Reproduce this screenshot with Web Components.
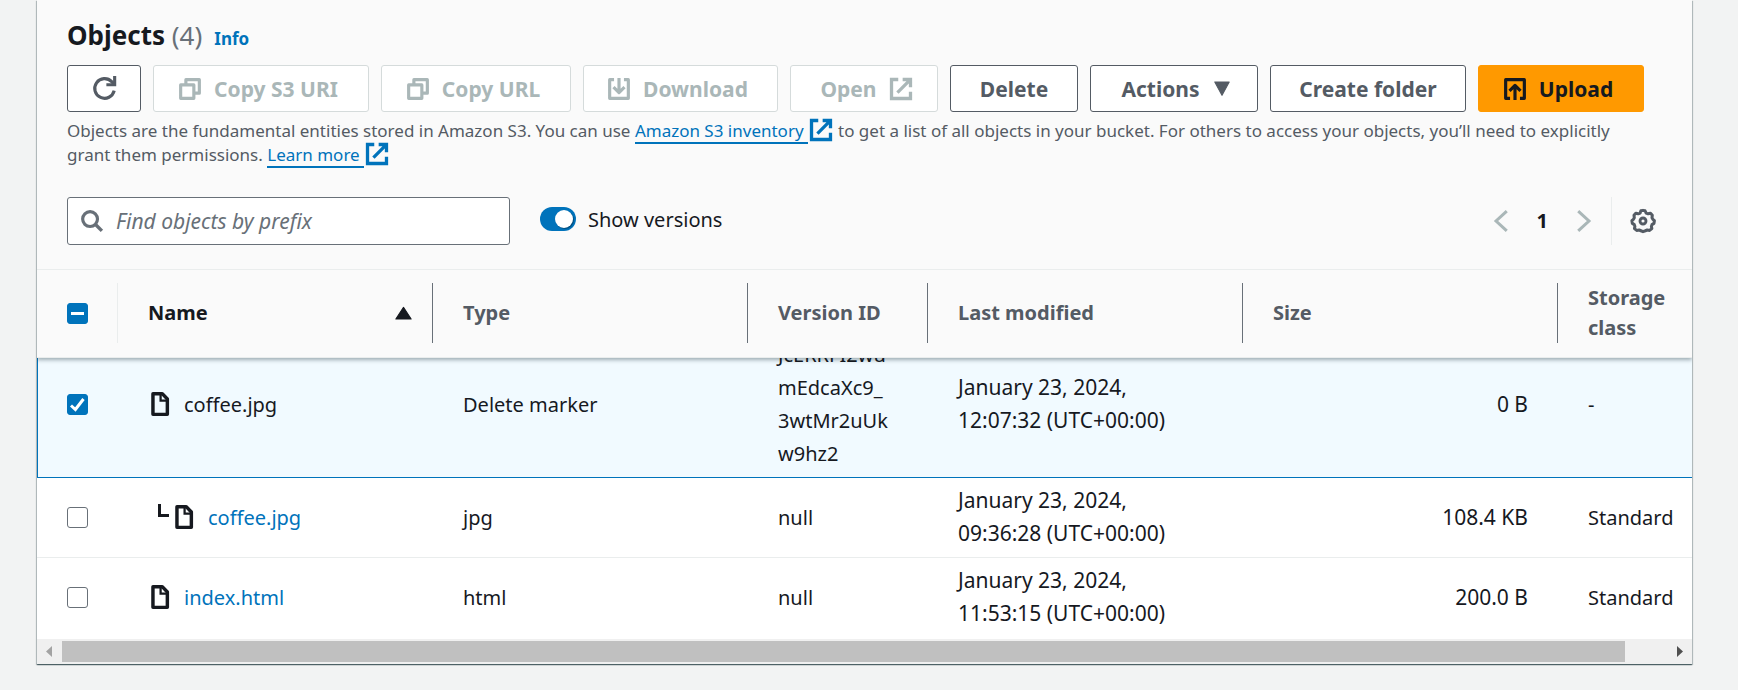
<!DOCTYPE html>
<html lang="en">
<head>
<meta charset="utf-8">
<title>Objects</title>
<style>
body{margin:0;background:#f2f3f3;color:#16191f;font:20px/33px "Noto Sans","Open Sans",sans-serif}
s3-panel{margin:0 46px 26px 37px}
</style>
</head>
<body>
<s3-panel>
  <s3-header slot="header"></s3-header>
  <s3-toolbar slot="header"></s3-toolbar>
  <s3-table></s3-table>
  <s3-scrollbar></s3-scrollbar>
</s3-panel>
<script>
const define = (name, html, setup) => customElements.define(name, class extends HTMLElement {
  connectedCallback() {
    if (this.shadowRoot) return;
    this.attachShadow({ mode: 'open' }).innerHTML = html;
    if (setup) setup.call(this, this.shadowRoot);
  }
});

const ICONS = {
  refresh: '<path d="M14.2 9.4A6.3 6.3 0 1 1 12.6 3.6L14 5" fill="none" stroke="currentColor" stroke-width="2"/><path d="M14.5 0v5.6H9.2" fill="none" stroke="currentColor" stroke-width="2"/>',
  copy: '<path d="M1.2 5h9.6v9.8H1.2zM5 4.6V1.2h9.8V11h-3.6" fill="none" stroke="currentColor" stroke-width="2.3" stroke-linejoin="round"/>',
  download: '<path d="M4.4 1.2H1.2v13.6h13.6V1.2h-3.2M8 0v10M4 6.6l4 4 4-4" fill="none" stroke="currentColor" stroke-width="2.3" stroke-linejoin="round"/>',
  upload: '<path d="M4.4 14.8H1.2V1.2h13.6v13.6h-3.2M8 16V6M4 9.4l4-4 4 4" fill="none" stroke="currentColor" stroke-width="2.3" stroke-linejoin="round"/>',
  external: '<path d="M6 1.1H1.1v13.8h13.8V10M9.2 1.1h5.7v5.7M14.6 1.4L5.4 10.6" fill="none" stroke="currentColor" stroke-width="2.4"/>',
  caret: '<path d="M1.6 1.8h12.8L8 13.6z" fill="currentColor" stroke="currentColor" stroke-linejoin="round"/>',
  sort: '<path d="M.8 13.2h14.4L8 2.2z" fill="currentColor" stroke="currentColor" stroke-linejoin="round"/>',
  search: '<circle cx="6.6" cy="6.6" r="5.4" fill="none" stroke="currentColor" stroke-width="2.3"/><path d="M10.4 10.4l4.8 4.8" fill="none" stroke="currentColor" stroke-width="2.5"/>',
  prev: '<path d="M12.2.8L4.4 8l7.8 7.2" fill="none" stroke="currentColor" stroke-width="2.2"/>',
  next: '<path d="M3.8.8L11.6 8l-7.8 7.2" fill="none" stroke="currentColor" stroke-width="2.2"/>',
  gear: '<path d="M6.6 1.2L8 .9l1.4.3.7 1.5 1.3.5 1.6-.4 1.2 1.4-.2 1.6.6 1.1 1 .9-.3 1.8-1.3.8-.4 1.2.3 1.5-1.5 1.2-1.6-.3-1.2.5L8 15.1l-1.4-.6-1.2-.5-1.6.3-1.5-1.2.3-1.5-.4-1.2-1.3-.8-.3-1.8 1-.9.6-1.1L2 4.2l1.2-1.4 1.6.4 1.3-.5z" fill="none" stroke="currentColor" stroke-width="2" stroke-linejoin="round"/><circle cx="8" cy="8" r="2" fill="none" stroke="currentColor" stroke-width="1.9"/>',
  file: '<path d="M3.3 1.1h6.2l3.4 3.6v10.2H3.3z" fill="none" stroke="currentColor" stroke-width="2.3" stroke-linejoin="round"/><path d="M8.4 1.2v4.6h4.4" fill="none" stroke="currentColor" stroke-width="1.5"/>',
  branch: '<path d="M1.5 0v11.5H11" fill="none" stroke="currentColor" stroke-width="3"/>'
};
define('s3-icon', `<style>:host{display:inline-block;width:22px;height:22px;flex:none}svg{display:block;width:100%;height:100%;overflow:visible}</style><svg viewBox="0 0 16 16" aria-hidden="true"></svg>`,
  function (r) { r.querySelector('svg').innerHTML = ICONS[this.getAttribute('name')]; });

define('s3-button', `<style>
:host{display:block;flex:none}
button{box-sizing:border-box;width:100%;height:47px;display:flex;align-items:center;justify-content:center;gap:13px;padding:0 2px;border:1px solid #545b64;border-radius:3px;background:#fff;color:#545b64;font:bold 21px/30px "Noto Sans","Open Sans",sans-serif;white-space:nowrap}
button.icon-led{padding-right:7px}
button.icon-trail{padding-left:6px}
button:disabled{border-color:#d5dbdb;color:#aab7b8}
:host([primary]) button{background:#ff9900;border-color:#ff9900;color:#16191f}
</style><button type="button"><slot></slot></button>`,
  function (r) {
    const b = r.querySelector('button');
    b.disabled = this.hasAttribute('disabled');
    if (this.hasAttribute('label')) b.setAttribute('aria-label', this.getAttribute('label'));
    if (this.firstElementChild && this.textContent.trim()) b.className = this.firstChild === this.firstElementChild ? 'icon-led' : 'icon-trail';
  });

define('s3-link', `<style>:host{display:inline}a{color:#0073bb;text-decoration:none;white-space:nowrap}span{border-bottom:2px solid #0073bb;padding-right:4px}s3-icon{vertical-align:-4px;margin:0 2px}</style><a href="#"><span><slot></slot></span><s3-icon name="external"></s3-icon></a>`);

define('s3-panel', `<style>
:host{display:block;background:#fff;box-shadow:0 1px 1px 0 rgba(0,28,36,.5),1px 1px 1px 0 rgba(0,28,36,.2),-1px 1px 1px 0 rgba(0,28,36,.2)}
.head{background:#fafafa;border-bottom:1px solid #eaeded;padding:17px 30px 24px}
</style><div class="head"><slot name="header"></slot></div><slot></slot>`);

define('s3-header', `<style>
:host{display:block}
.title{display:flex;align-items:baseline;gap:8px}
h2{margin:0;font-size:26px;line-height:36px;font-weight:700}
h2 span{color:#687078;font-weight:400}
.title a{color:#0073bb;font-weight:700;font-size:17px;text-decoration:none;margin-left:4px}
.actions{display:flex;flex-wrap:wrap;gap:12px;margin-top:10px}
p{margin:7px 0 0;padding-right:10px;color:#545b64;font-size:17px;line-height:24px}
</style>
<div class="title"><h2>Objects <span>(4)</span></h2><a href="#">Info</a></div>
<div class="actions">
<s3-button style="width:74px" label="Refresh"><s3-icon name="refresh" style="width:25px;height:25px"></s3-icon></s3-button>
<s3-button style="width:216px" disabled><s3-icon name="copy"></s3-icon>Copy S3 URI</s3-button>
<s3-button style="width:190px" disabled><s3-icon name="copy"></s3-icon>Copy URL</s3-button>
<s3-button style="width:195px" disabled><s3-icon name="download"></s3-icon>Download</s3-button>
<s3-button style="width:148px" disabled>Open<s3-icon name="external"></s3-icon></s3-button>
<s3-button style="width:128px">Delete</s3-button>
<s3-button style="width:168px">Actions<s3-icon name="caret" style="width:18px;height:18px"></s3-icon></s3-button>
<s3-button style="width:196px">Create folder</s3-button>
<s3-button style="width:166px" primary><s3-icon name="upload"></s3-icon>Upload</s3-button>
</div>
<p>Objects are the fundamental entities stored in Amazon S3. You can use <s3-link>Amazon S3 inventory</s3-link> to get a list of all objects in your bucket. For others to access your objects, you’ll need to explicitly grant them permissions. <s3-link>Learn more</s3-link></p>`);

define('s3-toolbar', `<style>
:host{display:flex;align-items:center;margin-top:30px}
.search{box-sizing:border-box;flex:0 1 443px;height:48px;display:flex;align-items:center;gap:13px;padding:0 13px;border:1px solid #687078;border-radius:3px;background:#fff;color:#687078}
input[type=search]{flex:1;min-width:0;border:0;padding:0;outline:0;background:none;font:21px/30px "Noto Sans","Open Sans",sans-serif;color:#16191f}
input::placeholder{color:#687078;font-style:italic;opacity:1}
.toggle{display:flex;align-items:center;gap:12px;margin:0 auto 4px 30px}
.toggle input{appearance:none;box-sizing:border-box;margin:0;width:36px;height:24px;padding:3px;border-radius:12px;background:#0073bb;display:flex;justify-content:flex-end}
.toggle input::before{content:"";width:18px;height:18px;border-radius:50%;background:#fff;box-shadow:1px 1px 1px rgba(0,0,0,.35)}
nav{display:flex;align-items:center;gap:25px}
button{border:0;padding:0;background:none;font:20px/30px "Noto Sans","Open Sans",sans-serif;color:#16191f;display:block}
button s3-icon{display:block}
button:disabled{color:#aab7b8}
.page{font-weight:700}
.prefs{display:flex;align-items:center;height:48px;border-left:1px solid #eaeded;margin-left:16px;padding:0 7px 0 19px}
.prefs button{color:#545b64}
</style>
<div class="search"><s3-icon name="search"></s3-icon><input type="search" placeholder="Find objects by prefix" aria-label="Find objects by prefix"></div>
<label class="toggle"><input type="checkbox" role="switch" checked><span>Show versions</span></label>
<nav aria-label="Pagination"><button type="button" disabled aria-label="Previous page"><s3-icon name="prev"></s3-icon></button><button type="button" class="page">1</button><button type="button" disabled aria-label="Next page"><s3-icon name="next"></s3-icon></button></nav>
<div class="prefs"><button type="button" aria-label="Preferences"><s3-icon name="gear" style="width:24px;height:24px"></s3-icon></button></div>`);

define('s3-check', `<style>
:host{display:block;width:21px;height:21px}
input{appearance:none;display:block;box-sizing:border-box;width:21px;height:21px;margin:0;border:1px solid #687078;border-radius:3px;background:#fff}
label{display:grid}label>*{grid-area:1/1}
svg{width:21px;height:21px;pointer-events:none;z-index:1;fill:none;stroke:#fff;stroke-width:3}
input:checked,input:indeterminate{background-color:#0073bb;border-color:#0073bb}
path{display:none}
input:checked~svg .tick,input:indeterminate~svg .dash{display:block}
</style><label><input type="checkbox"><svg viewBox="0 0 21 21"><path class="tick" d="M4 11.5l4.4 4L16.5 5"/><path class="dash" d="M4 10.5h13"/></svg></label>`,
  function (r) {
    const i = r.querySelector('input');
    i.setAttribute('aria-label', this.getAttribute('label'));
    i.checked = this.getAttribute('state') === 'on';
    i.indeterminate = this.getAttribute('state') === 'mixed';
  });

const cols = '<colgroup><col style="width:81px"><col style="width:315px"><col style="width:315px"><col style="width:180px"><col style="width:315px"><col style="width:315px"><col></colgroup>';
define('s3-table', `<style>
:host{display:block;overflow:hidden}
table{width:100%;table-layout:fixed;border-collapse:separate;border-spacing:0}
.head{background:#fafafa;position:relative;z-index:1;border-bottom:1px solid #eaeded;box-shadow:0 2px 4px rgba(0,28,36,.35)}
th{padding:13px 0 14px;text-align:left;color:#545b64;line-height:30px}
th>div{display:flex;align-items:center;justify-content:space-between;height:60px;padding:0 20px 0 30px;border-right:1px solid #687078}
th:first-child>div{border-color:#eaeded}
th:last-child>div{border:0;padding-right:0}
th.sorted{color:#16191f}
/* the first row is scrolled partly under the sticky head */
.body{margin-top:-26px}
td{padding:6px 30px 7px;vertical-align:middle;border-bottom:1px solid #eaeded}
td:first-child{padding-right:0}
tr:last-child td{border-bottom:0;padding-bottom:9px}
td:nth-child(5),td:nth-child(6){font-size:21px}
td:nth-child(6){text-align:right}
td:last-child{padding-right:0}
tr.selected td{background:#f1faff;border-bottom-color:#0073bb}
tr.selected td:first-child{border-left:1px solid #0073bb;padding-left:29px}
.name{display:flex;align-items:center;gap:12px}
.name s3-icon{width:24px;height:24px}
.name.child{padding-left:10px}
.child s3-icon[name=branch]{width:16px;height:16px;margin:0 -14px 11px 0}
a{color:#0073bb;text-decoration:none}
</style>
<div class="head"><table>${cols}<thead><tr>
<th><div><s3-check state="mixed" label="Select all"></s3-check></div></th>
<th class="sorted" aria-sort="ascending"><div>Name<s3-icon name="sort" style="width:17px;height:17px"></s3-icon></div></th>
<th><div>Type</div></th><th><div>Version ID</div></th><th><div>Last modified</div></th><th><div>Size</div></th><th><div>Storage class</div></th>
</tr></thead></table></div>
<div class="body"><table aria-label="Objects">${cols}<tbody>
<tr class="selected"><td><s3-check state="on" label="Select coffee.jpg"></s3-check></td><td><div class="name"><s3-icon name="file"></s3-icon>coffee.jpg</div></td><td>Delete marker</td><td>JcERRFI2wu<br>mEdcaXc9_<br>3wtMr2uUk<br>w9hz2</td><td>January 23, 2024,<br>12:07:32 (UTC+00:00)</td><td>0 B</td><td>-</td></tr>
<tr><td><s3-check label="Select coffee.jpg version"></s3-check></td><td><div class="name child"><s3-icon name="branch"></s3-icon><s3-icon name="file"></s3-icon><a href="#">coffee.jpg</a></div></td><td>jpg</td><td>null</td><td>January 23, 2024,<br>09:36:28 (UTC+00:00)</td><td>108.4 KB</td><td>Standard</td></tr>
<tr><td><s3-check label="Select index.html"></s3-check></td><td><div class="name"><s3-icon name="file"></s3-icon><a href="#">index.html</a></div></td><td>html</td><td>null</td><td>January 23, 2024,<br>11:53:15 (UTC+00:00)</td><td>200.0 B</td><td>Standard</td></tr>
</tbody></table></div>`);

define('s3-scrollbar', `<style>
:host{display:flex;align-items:center;height:25px;background:#f0f0f0}
svg{width:25px;height:25px;flex:none}
.track{flex:1;padding-right:42px}
.thumb{height:21px;background:#c0c0c0}
</style><svg viewBox="0 0 25 25"><path d="M15 7v11l-6-5.5z" fill="#a3a3a3"/></svg><div class="track"><div class="thumb"></div></div><svg viewBox="0 0 25 25"><path d="M10 7v11l6-5.5z" fill="#505050"/></svg>`);
</script>
</body>
</html>
